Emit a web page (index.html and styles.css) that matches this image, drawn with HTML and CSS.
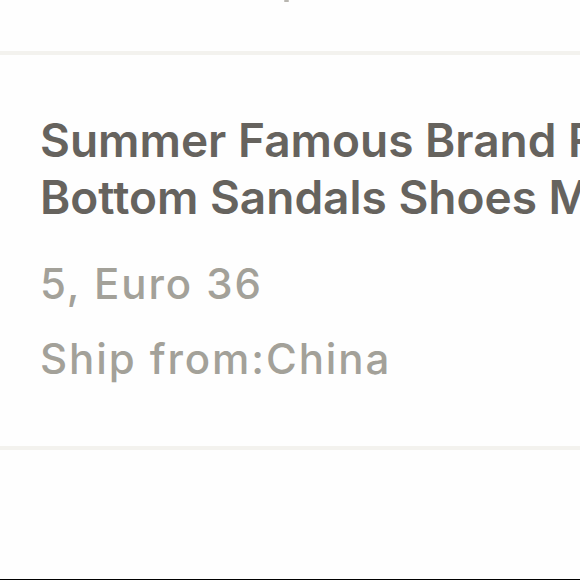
FILE: index.html
```html
<!DOCTYPE html>
<html>
<head>
<meta charset="utf-8">
<link rel="stylesheet" href="styles.css">
</head>
<body>
<div class="page">
  <div class="top"><span class="tick"></span></div>
  <div class="sep"></div>
  <div class="card">
    <div class="title">Summer Famous Brand Rome Bottom Sandals Shoes Men</div>
    <div class="meta size">5, Euro 36</div>
    <div class="meta ship">Ship from:China</div>
  </div>
  <div class="sep"></div>
  <div class="rest"></div>
  <div class="edge"></div>
</div>
</body>
</html>
```
FILE: styles.css
```css
html, body {
  margin: 0;
  padding: 0;
  background: #fefefe;
}
.page {
  width: 580px;
  height: 580px;
  overflow: hidden;
  display: flex;
  flex-direction: column;
  font-family: Inter, "Liberation Sans", sans-serif;
}
.top {
  height: 51px;
  display: flex;
  justify-content: center;
}
.tick {
  width: 5px;
  height: 2px;
  margin-left: -8px;
  background: #b8b6b0;
  border-radius: 1px;
}
.sep {
  height: 4px;
  background: #f3f2ee;
}
.card {
  height: 391px;
  box-sizing: border-box;
  padding: 57px 0 0 40px;
  overflow: hidden;
  white-space: nowrap;
}
.title {
  width: 680px;
  white-space: normal;
  font-size: 46px;
  font-weight: 600;
  line-height: 57px;
  color: #66635e;
}
.meta {
  font-size: 42px;
  font-weight: 500;
  letter-spacing: 1.9px;
  color: #a3a199;
  line-height: 56px;
}
.size {
  margin-top: 30px;
}
.ship {
  margin-top: 19px;
}
.rest {
  flex: 1;
}
.edge {
  height: 1px;
  background: #000;
}
```
